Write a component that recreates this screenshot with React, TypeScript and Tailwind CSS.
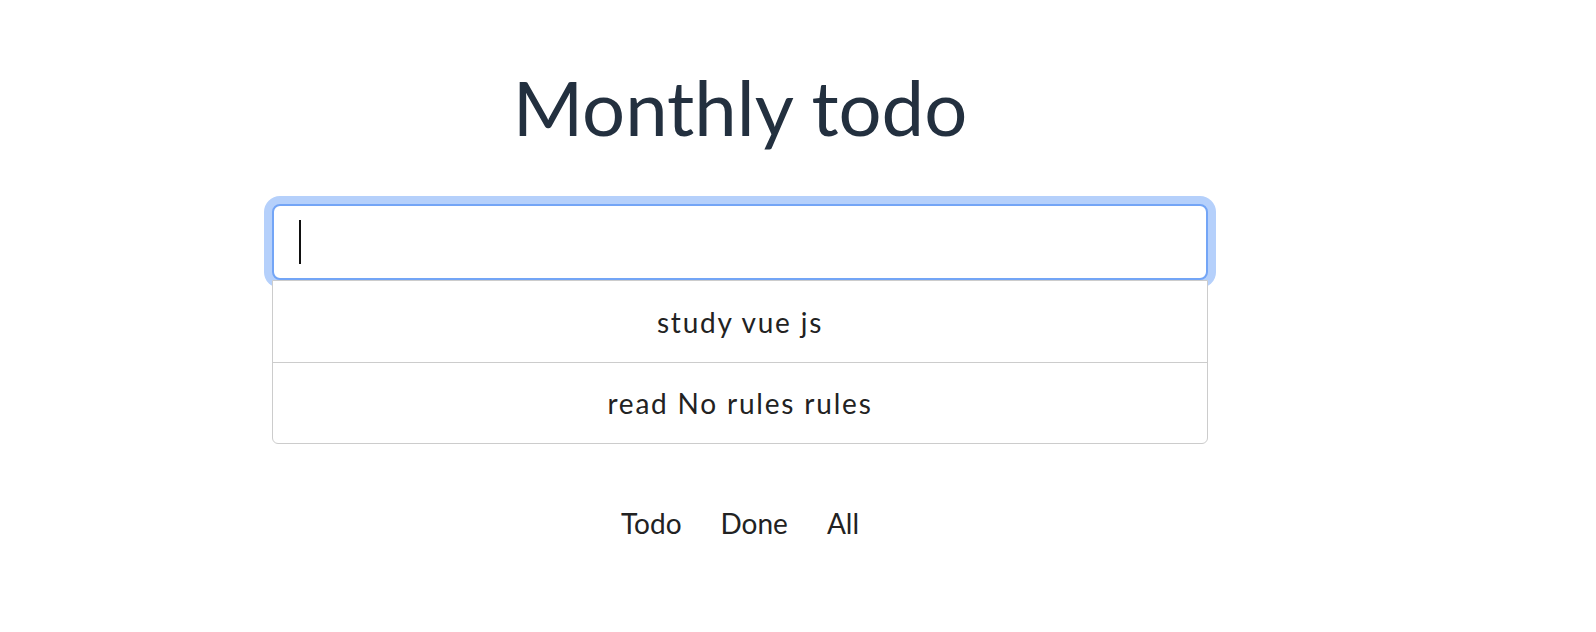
import React from 'react';

const todos = ['study vue js', 'read No rules rules'];
const tabs = ['Todo', 'Done', 'All'];

const App: React.FC = () => {
  return (
    <div className="w-full h-[632px] bg-white font-['Lato',sans-serif] text-[#222]">
      <div className="ml-[272px] w-[936px] flex flex-col">
        <h1 className="pt-[69px] text-center text-[76px] leading-none text-[#23303f]">Monthly todo</h1>

        <div className="relative mt-[59px]">
          <input
            type="text"
            className="block w-full h-[76px] rounded-[8px] border-2 border-[#73a5f6] bg-white px-[25px] text-[34px] caret-transparent outline-none shadow-[0_0_0_8px_#b5d0fb]"
          />
          <span className="absolute left-[27px] top-[16px] h-[44px] w-[2px] bg-[#111]" />
        </div>

        <ul className="relative z-10 bg-white border border-[#cccccc] rounded-b-[6px]">
          {todos.map((t, i) => (
            <li
              key={t}
              className={`h-[81px] flex items-center justify-center text-[28px] tracking-[1.8px] ${i > 0 ? 'border-t border-[#cccccc]' : ''}`}
            >
              {t}
            </li>
          ))}
        </ul>

        <nav className="mt-[65px] flex justify-center gap-[39px] text-[28px]">
          {tabs.map((t) => (
            <button key={t} className="leading-none">{t}</button>
          ))}
        </nav>
      </div>
    </div>
  );
};

export default App;
